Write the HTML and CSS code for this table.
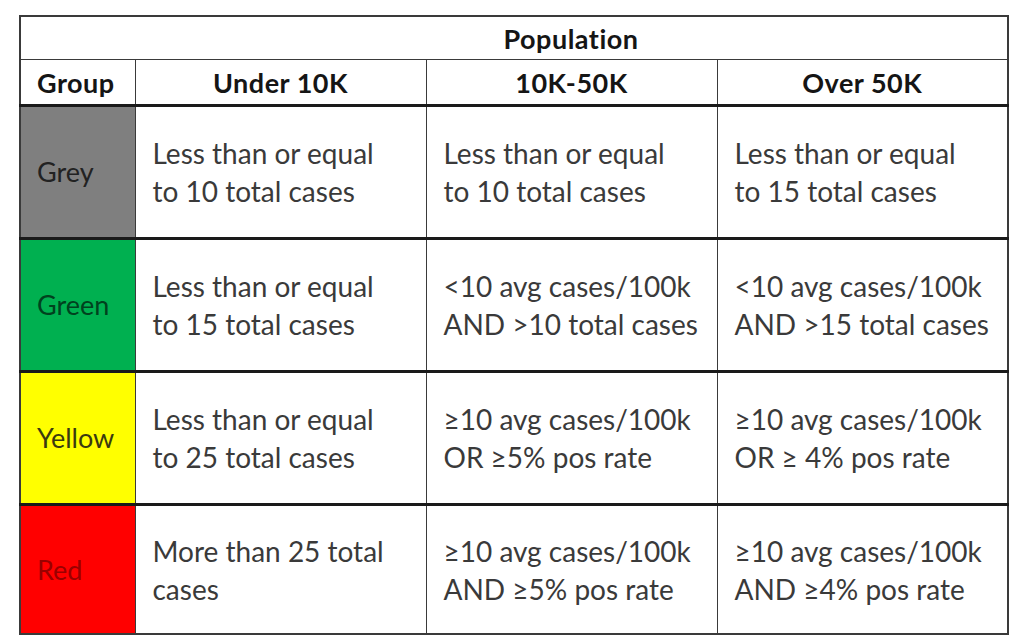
FILE: index.html
```html
<!DOCTYPE html>
<html>
<head>
<meta charset="utf-8">
<link rel="stylesheet" href="styles.css">
</head>
<body>
<table class="grid">
  <colgroup>
    <col class="c-group">
    <col class="c-pop">
    <col class="c-pop">
    <col class="c-pop">
  </colgroup>
  <tr class="top">
    <th class="blank"></th>
    <th class="pop" colspan="3">Population</th>
  </tr>
  <tr class="heads">
    <th class="group-h">Group</th>
    <th>Under 10K</th>
    <th>10K-50K</th>
    <th>Over 50K</th>
  </tr>
  <tr class="row">
    <td class="label grey">Grey</td>
    <td>Less than or equal<br>to 10 total cases</td>
    <td>Less than or equal<br>to 10 total cases</td>
    <td>Less than or equal<br>to 15 total cases</td>
  </tr>
  <tr class="row">
    <td class="label green">Green</td>
    <td>Less than or equal<br>to 15 total cases</td>
    <td>&lt;10 avg cases/100k<br>AND &gt;10 total cases</td>
    <td>&lt;10 avg cases/100k<br>AND &gt;15 total cases</td>
  </tr>
  <tr class="row">
    <td class="label yellow">Yellow</td>
    <td>Less than or equal<br>to 25 total cases</td>
    <td>≥10 avg cases/100k<br>OR ≥5% pos rate</td>
    <td>≥10 avg cases/100k<br>OR ≥ 4% pos rate</td>
  </tr>
  <tr class="row last">
    <td class="label red">Red</td>
    <td>More than 25 total<br>cases</td>
    <td>≥10 avg cases/100k<br>AND ≥5% pos rate</td>
    <td>≥10 avg cases/100k<br>AND ≥4% pos rate</td>
  </tr>
</table>
</body>
</html>
```

FILE: styles.css
```css
html, body {
  margin: 0;
  padding: 0;
  background: #ffffff;
}

body {
  padding: 15px 0 0 19px;
  font-family: "Lato", "Open Sans", "Liberation Sans", sans-serif;
}

.grid {
  border-collapse: collapse;
  width: 989px;
  table-layout: fixed;
  border: 2px solid #3a3a3a;
}

.c-group { width: 115px; }
.c-pop { width: 291px; }

.grid th,
.grid td {
  padding: 0;
  border: 1.5px solid #3a3a3a;
}

.grid th {
  font-weight: 700;
  font-size: 27px;
  letter-spacing: 0.5px;
  color: #151515;
  text-align: center;
}

.top th {
  height: 42px;
}

.top th.blank {
  border-right: none;
}

.top th.pop {
  border-left: none;
}

.heads th {
  border-bottom: 3px solid #1a1a1a;
  height: 44px;
}

.heads th.group-h {
  text-align: left;
  padding-left: 16px;
}

.row td {
  height: 130px;
  font-size: 28px;
  line-height: 38px;
  color: #3a3a3a;
  padding-left: 17px;
  border-bottom: 3px solid #1a1a1a;
  vertical-align: middle;
}

.row.last td {
  height: 127px;
  border-bottom: 2px solid #3a3a3a;
}

.row td.label {
  padding-left: 16px;
  font-size: 27px;
}

.grey { background: #7f7f7f; color: #222222 !important; }
.green { background: #00b050; color: #00421e !important; }
.yellow { background: #ffff00; color: #3a3a10 !important; }
.red { background: #ff0000; color: #9a0000 !important; }
```
